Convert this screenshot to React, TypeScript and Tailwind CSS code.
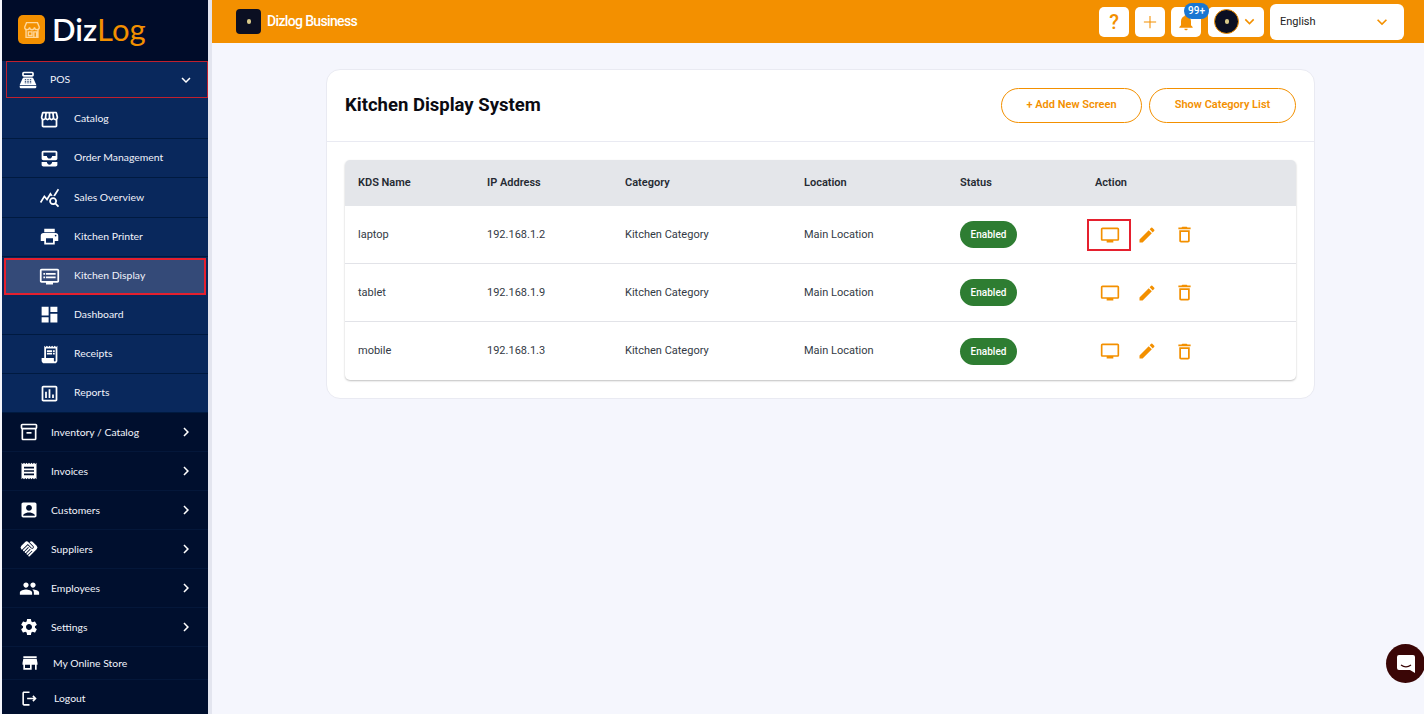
import type { ReactNode } from "react";
import {
  MdAccountBox,
  MdAllInbox,
  MdDashboard,
  MdDvr,
  MdEdit,
  MdHandshake,
  MdKeyboardArrowDown,
  MdKeyboardArrowRight,
  MdNotifications,
  MdOutlineAssessment,
  MdOutlineDelete,
  MdOutlineInventory2,
  MdOutlineLogout,
  MdOutlineTv,
  MdPeople,
  MdPointOfSale,
  MdPrint,
  MdQueryStats,
  MdReceipt,
  MdReceiptLong,
  MdSettings,
  MdStore,
  MdStorefront,
} from "react-icons/md";

const subItems = [
  { label: "Catalog", icon: <MdStorefront size={21} /> },
  { label: "Order Management", icon: <MdAllInbox size={21} /> },
  { label: "Sales Overview", icon: <MdQueryStats size={21} /> },
  { label: "Kitchen Printer", icon: <MdPrint size={21} /> },
  { label: "Kitchen Display", icon: <MdDvr size={21} />, active: true },
  { label: "Dashboard", icon: <MdDashboard size={21} /> },
  { label: "Receipts", icon: <MdReceiptLong size={21} /> },
  { label: "Reports", icon: <MdOutlineAssessment size={21} /> },
];

const mainItems = [
  { label: "Inventory / Catalog", icon: <MdOutlineInventory2 size={20} /> },
  { label: "Invoices", icon: <MdReceipt size={20} /> },
  { label: "Customers", icon: <MdAccountBox size={20} /> },
  { label: "Suppliers", icon: <MdHandshake size={20} /> },
  { label: "Employees", icon: <MdPeople size={21} /> },
  { label: "Settings", icon: <MdSettings size={20} /> },
];

const screens = [
  { name: "laptop", ip: "192.168.1.2", highlighted: true },
  { name: "tablet", ip: "192.168.1.9" },
  { name: "mobile", ip: "192.168.1.3" },
];

const columns = "grid grid-cols-[129px_138px_179px_156px_135px_1fr] items-center pl-[13px]";

const SmallLogo = ({ className }: { className: string }) => (
  <div className={`flex items-center justify-center bg-[#0b0f22] ${className}`}>
    <div className="h-[5px] w-[4px] rounded-full bg-[#d8c98a]" />
  </div>
);

const HeaderButton = ({ children, className = "" }: { children: ReactNode; className?: string }) => (
  <div className={`flex h-[30px] items-center justify-center rounded-[5px] bg-white text-[#f39000] ${className}`}>
    {children}
  </div>
);

const Sidebar = () => (
  <aside className="flex h-full w-[212px] shrink-0 flex-col border-r-[4px] border-l-[2px] border-r-[#e3e5ef] border-l-[#f5f6fd] bg-[#000f2e] font-['Lato',sans-serif] text-[10.4px] text-[#f1f3fb]">
    <div className="flex h-[61px] shrink-0 items-start bg-[#000c29] pl-[16px] pt-[15px]">
      <div className="flex h-[29px] w-[27px] items-center justify-center rounded-[5px] bg-[#f39000]">
        <svg viewBox="0 0 24 24" className="h-[22px] w-[22px]" fill="none" stroke="#ffd79a" strokeWidth="1.5">
          <path d="M4 9l2-5h12l2 5M4 9a2.6 2.6 0 0 0 5.3 0 2.6 2.6 0 0 0 5.4 0A2.6 2.6 0 0 0 20 9" />
          <path d="M5.5 12v8h13v-8M8 14h4v4H8zM14 14h3v6h-3z" />
        </svg>
      </div>
      <div className="ml-[7px] mt-[-7px] font-['Lato',sans-serif] text-[31px] leading-[42px]">
        <span className="font-semibold text-white">Diz</span>
        <span className="text-[#f39000]">Log</span>
      </div>
    </div>

    <div className="shrink-0 bg-[#09285c] pl-[4px]">
      <div className="flex h-[37px] items-center border border-[#c0202e] pl-[11px] pr-[12px]">
        <MdPointOfSale size={20} className="text-white" />
        <span className="ml-[12px] flex-1">POS</span>
        <MdKeyboardArrowDown size={18} className="text-white" />
      </div>
    </div>

    <div className="flex shrink-0 flex-col bg-[#09285c] pt-[2px]">
      {subItems.map((item) => (
        <div
          key={item.label}
          className={
            item.active
              ? "mx-[2px] my-[1px] flex h-[37px] items-center border-[2px] border-[#e5202e] bg-[#344a78] pl-[33px]"
              : "flex h-[39.2px] items-center border-b border-[#001a40] pl-[37px]"
          }
        >
          <span className="flex w-[35px] shrink-0 text-white">{item.icon}</span>
          {item.label}
        </div>
      ))}
    </div>

    {mainItems.map((item) => (
      <div key={item.label} className="flex h-[39px] shrink-0 items-center border-b border-[#04173a] pl-[17px] pr-[13px]">
        <span className="flex w-[32px] shrink-0 text-white">{item.icon}</span>
        <span className="flex-1">{item.label}</span>
        <MdKeyboardArrowRight size={18} className="text-white" />
      </div>
    ))}

    <div className="flex h-[33px] shrink-0 items-center border-b border-[#04173a] pl-[18px]">
      <MdStore size={20} className="mr-[13px] text-white" />
      My Online Store
    </div>
    <div className="flex h-[36px] shrink-0 items-center pl-[18px]">
      <MdOutlineLogout size={19} className="mr-[15px] text-white" />
      Logout
    </div>
  </aside>
);

const App = () => {
  return (
    <div className="relative flex h-[714px] w-[1424px] overflow-hidden bg-[#f5f6fd] font-['Roboto',sans-serif]">
      <Sidebar />

      <div className="flex min-w-0 flex-1 flex-col">
        <header className="flex h-[43px] shrink-0 items-center bg-[#f39000] pl-[24px] pr-[20px]">
          <SmallLogo className="h-[25px] w-[25px] rounded-[4px]" />
          <span className="ml-[6px] flex-1 text-[14px] font-medium tracking-[-0.65px] text-white">Dizlog Business</span>
          <div className="flex items-center">
            <HeaderButton className="w-[30px] text-[20px] font-medium">?</HeaderButton>
            <HeaderButton className="ml-[6px] w-[30px]">
              <svg viewBox="0 0 16 16" className="h-[14px] w-[14px]" stroke="currentColor" strokeWidth="1.2">
                <path d="M8 1v14M1 8h14" />
              </svg>
            </HeaderButton>
            <div className="relative ml-[6px]">
              <HeaderButton className="w-[30px]">
                <MdNotifications size={20} />
              </HeaderButton>
              <span className="absolute left-[13px] top-[-4px] flex h-[16px] w-[25px] items-center justify-center rounded-full bg-[#1976d2] text-[10px] font-medium text-white">
                99+
              </span>
            </div>
            <HeaderButton className="ml-[7px] w-[56px] justify-start pl-[6px]">
              <SmallLogo className="h-[25px] w-[25px] rounded-full border border-[#f39000]" />
              <MdKeyboardArrowDown size={19} className="ml-[1px]" />
            </HeaderButton>
            <div className="ml-[6px] flex h-[36px] w-[134px] items-center justify-between rounded-[6px] bg-white pl-[10px] pr-[12px] text-[11px] text-[#222]">
              <span className="pt-[2px]">English</span>
              <MdKeyboardArrowDown size={20} className="text-[#f39000]" />
            </div>
          </div>
        </header>

        <main className="flex-1 pl-[114px] pt-[26px]">
          <section className="w-[989px] rounded-[14px] border border-[#e9eaf2] bg-white pb-[18px]">
            <div className="flex h-[72px] items-center justify-between border-b border-[#e9eaf2] pl-[18px] pr-[18px]">
              <h1 className="text-[18.5px] font-bold text-[#0b0b12]">Kitchen Display System</h1>
              <div className="flex gap-[7px] text-[11px] font-semibold text-[#f39000]">
                <button className="h-[35px] w-[141px] rounded-full border-[1.5px] border-[#f39000]">+ Add New Screen</button>
                <button className="h-[35px] w-[147px] rounded-full border-[1.5px] border-[#f39000]">Show Category List</button>
              </div>
            </div>

            <div className="ml-[18px] mt-[18px] w-[951px] overflow-hidden rounded-[5px] text-[11px] text-[#333a45] shadow-[0_1px_2px_rgba(0,0,0,0.25)]">
              <div className={`${columns} h-[46px] bg-[#e4e6ea] pt-[1px] font-semibold text-[#262b33]`}>
                <span>KDS Name</span>
                <span>IP Address</span>
                <span>Category</span>
                <span>Location</span>
                <span>Status</span>
                <span>Action</span>
              </div>
              {screens.map((screen) => (
                <div key={screen.name} className={`${columns} h-[58px] border-b border-[#e2e3e8] last:border-b-0`}>
                  <span className="pt-[1px]">{screen.name}</span>
                  <span className="pt-[1px]">{screen.ip}</span>
                  <span className="pt-[1px]">Kitchen Category</span>
                  <span className="pt-[1px]">Main Location</span>
                  <span className="flex h-[27px] w-[57px] items-center justify-center rounded-full bg-[#2e7d32] text-[10px] font-medium text-white">
                    Enabled
                  </span>
                  <div className="flex items-center text-[#f39000]">
                    <span
                      className={
                        screen.highlighted
                          ? "ml-[-8px] flex h-[32px] w-[44px] items-center justify-center border-[2px] border-[#e5202e] pl-[2px]"
                          : "ml-[-8px] flex h-[32px] w-[44px] items-center justify-center pl-[2px]"
                      }
                    >
                      <MdOutlineTv size={20} />
                    </span>
                    <MdEdit size={20} className="ml-[6px]" />
                    <MdOutlineDelete size={21} className="ml-[17px]" />
                  </div>
                </div>
              ))}
            </div>
          </section>
        </main>
      </div>

      <div className="absolute left-[1386px] top-[644px] flex h-[39px] w-[39px] items-center justify-center rounded-full bg-[#3a0606]">
        <svg viewBox="0 0 24 24" className="h-[24px] w-[24px]">
          <path d="M5 3h14a2 2 0 0 1 2 2v16l-5-3H5a2 2 0 0 1-2-2V5a2 2 0 0 1 2-2z" fill="#fff" />
          <path d="M7 13c3 2.2 7 2.2 10 0" fill="none" stroke="#3a0606" strokeWidth="1.3" />
        </svg>
      </div>
    </div>
  );
};

export default App;
